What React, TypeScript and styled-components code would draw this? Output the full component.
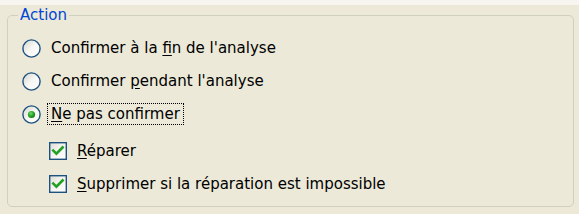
import React from "react";
import styled, { createGlobalStyle } from "styled-components";

const GlobalStyle = createGlobalStyle`
  html, body {
    margin: 0;
    padding: 0;
    background: #ece9d8;
  }
  body {
    font-family: "DejaVu Sans", "Liberation Sans", sans-serif;
    font-size: 15px;
    color: #000;
  }
`;

const Page = styled.div`
  width: 579px;
  height: 214px;
  overflow: hidden;
  background: #ece9d8;
`;

const TopStrip = styled.div`
  height: 5px;
  background: #f6f5ef;
`;

const GroupBox = styled.fieldset`
  margin: 1px 5px 0 7px;
  padding: 0 14px 10px 14px;
  border: 1px solid #d0d0bf;
  border-radius: 5px;
  min-width: 0;
`;

const Legend = styled.legend`
  margin-left: -4px;
  padding: 0 2px;
  color: #0046d5;
  font-size: 15px;
  line-height: 18px;
`;

const List = styled.div`
  display: flex;
  flex-direction: column;
  gap: 9px;
  padding-top: 12px;
`;

const SubList = styled.div`
  display: flex;
  flex-direction: column;
  gap: 9px;
  margin-top: 4px;
  margin-left: 27px;
`;

const Row = styled.div`
  display: flex;
  align-items: center;
  height: 24px;
  gap: 6px;
`;

const Label = styled.span<{ $focused?: boolean }>`
  padding: 1px 3px;
  line-height: 18px;
  white-space: nowrap;
  border: 1px dotted ${(p) => (p.$focused ? "#000" : "transparent")};
`;

const Key = styled.span`
  text-decoration: underline;
  text-underline-offset: 2px;
`;

const Radio = ({ checked }: { checked?: boolean }) => (
  <svg width="19" height="19" viewBox="0 0 19 19">
    <defs>
      <linearGradient id="rfill" x1="0" y1="0" x2="1" y2="1">
        <stop offset="0" stopColor="#d6d5cc" />
        <stop offset="0.5" stopColor="#f7f7f4" />
        <stop offset="1" stopColor="#ffffff" />
      </linearGradient>
      <radialGradient id="rdot" cx="0.4" cy="0.35" r="0.7">
        <stop offset="0" stopColor="#6fd86f" />
        <stop offset="0.6" stopColor="#21a121" />
        <stop offset="1" stopColor="#127512" />
      </radialGradient>
    </defs>
    <circle cx="9.5" cy="9.5" r="8.6" fill="url(#rfill)" stroke="#1c5180" strokeWidth="1.4" />
    {checked && <circle cx="9.5" cy="9.5" r="3.6" fill="url(#rdot)" />}
  </svg>
);

const Check = () => (
  <svg width="18" height="18" viewBox="0 0 18 18">
    <defs>
      <linearGradient id="cfill" x1="0" y1="0" x2="1" y2="1">
        <stop offset="0" stopColor="#dcdbd3" />
        <stop offset="0.45" stopColor="#f4f3ee" />
        <stop offset="1" stopColor="#ffffff" />
      </linearGradient>
    </defs>
    <rect x="0.7" y="0.7" width="16.6" height="16.6" fill="url(#cfill)" stroke="#1c5180" strokeWidth="1.4" />
    <path d="M4.3 8.6 L7.4 11.7 L13.6 5.4" fill="none" stroke="#21a121" strokeWidth="2.6" strokeLinecap="square" />
  </svg>
);

export default function App() {
  return (
    <Page>
      <GlobalStyle />
      <TopStrip />
      <GroupBox>
        <Legend>Action</Legend>
        <List>
          <Row>
            <Radio />
            <Label>
              Confirmer à la <Key>f</Key>in de l'analyse
            </Label>
          </Row>
          <Row>
            <Radio />
            <Label>
              Confirmer <Key>p</Key>endant l'analyse
            </Label>
          </Row>
          <Row>
            <Radio checked />
            <Label $focused>
              <Key>N</Key>e pas confirmer
            </Label>
          </Row>
          <SubList>
            <Row>
              <Check />
              <Label>
                <Key>R</Key>éparer
              </Label>
            </Row>
            <Row>
              <Check />
              <Label>
                <Key>S</Key>upprimer si la réparation est impossible
              </Label>
            </Row>
          </SubList>
        </List>
      </GroupBox>
    </Page>
  );
}
